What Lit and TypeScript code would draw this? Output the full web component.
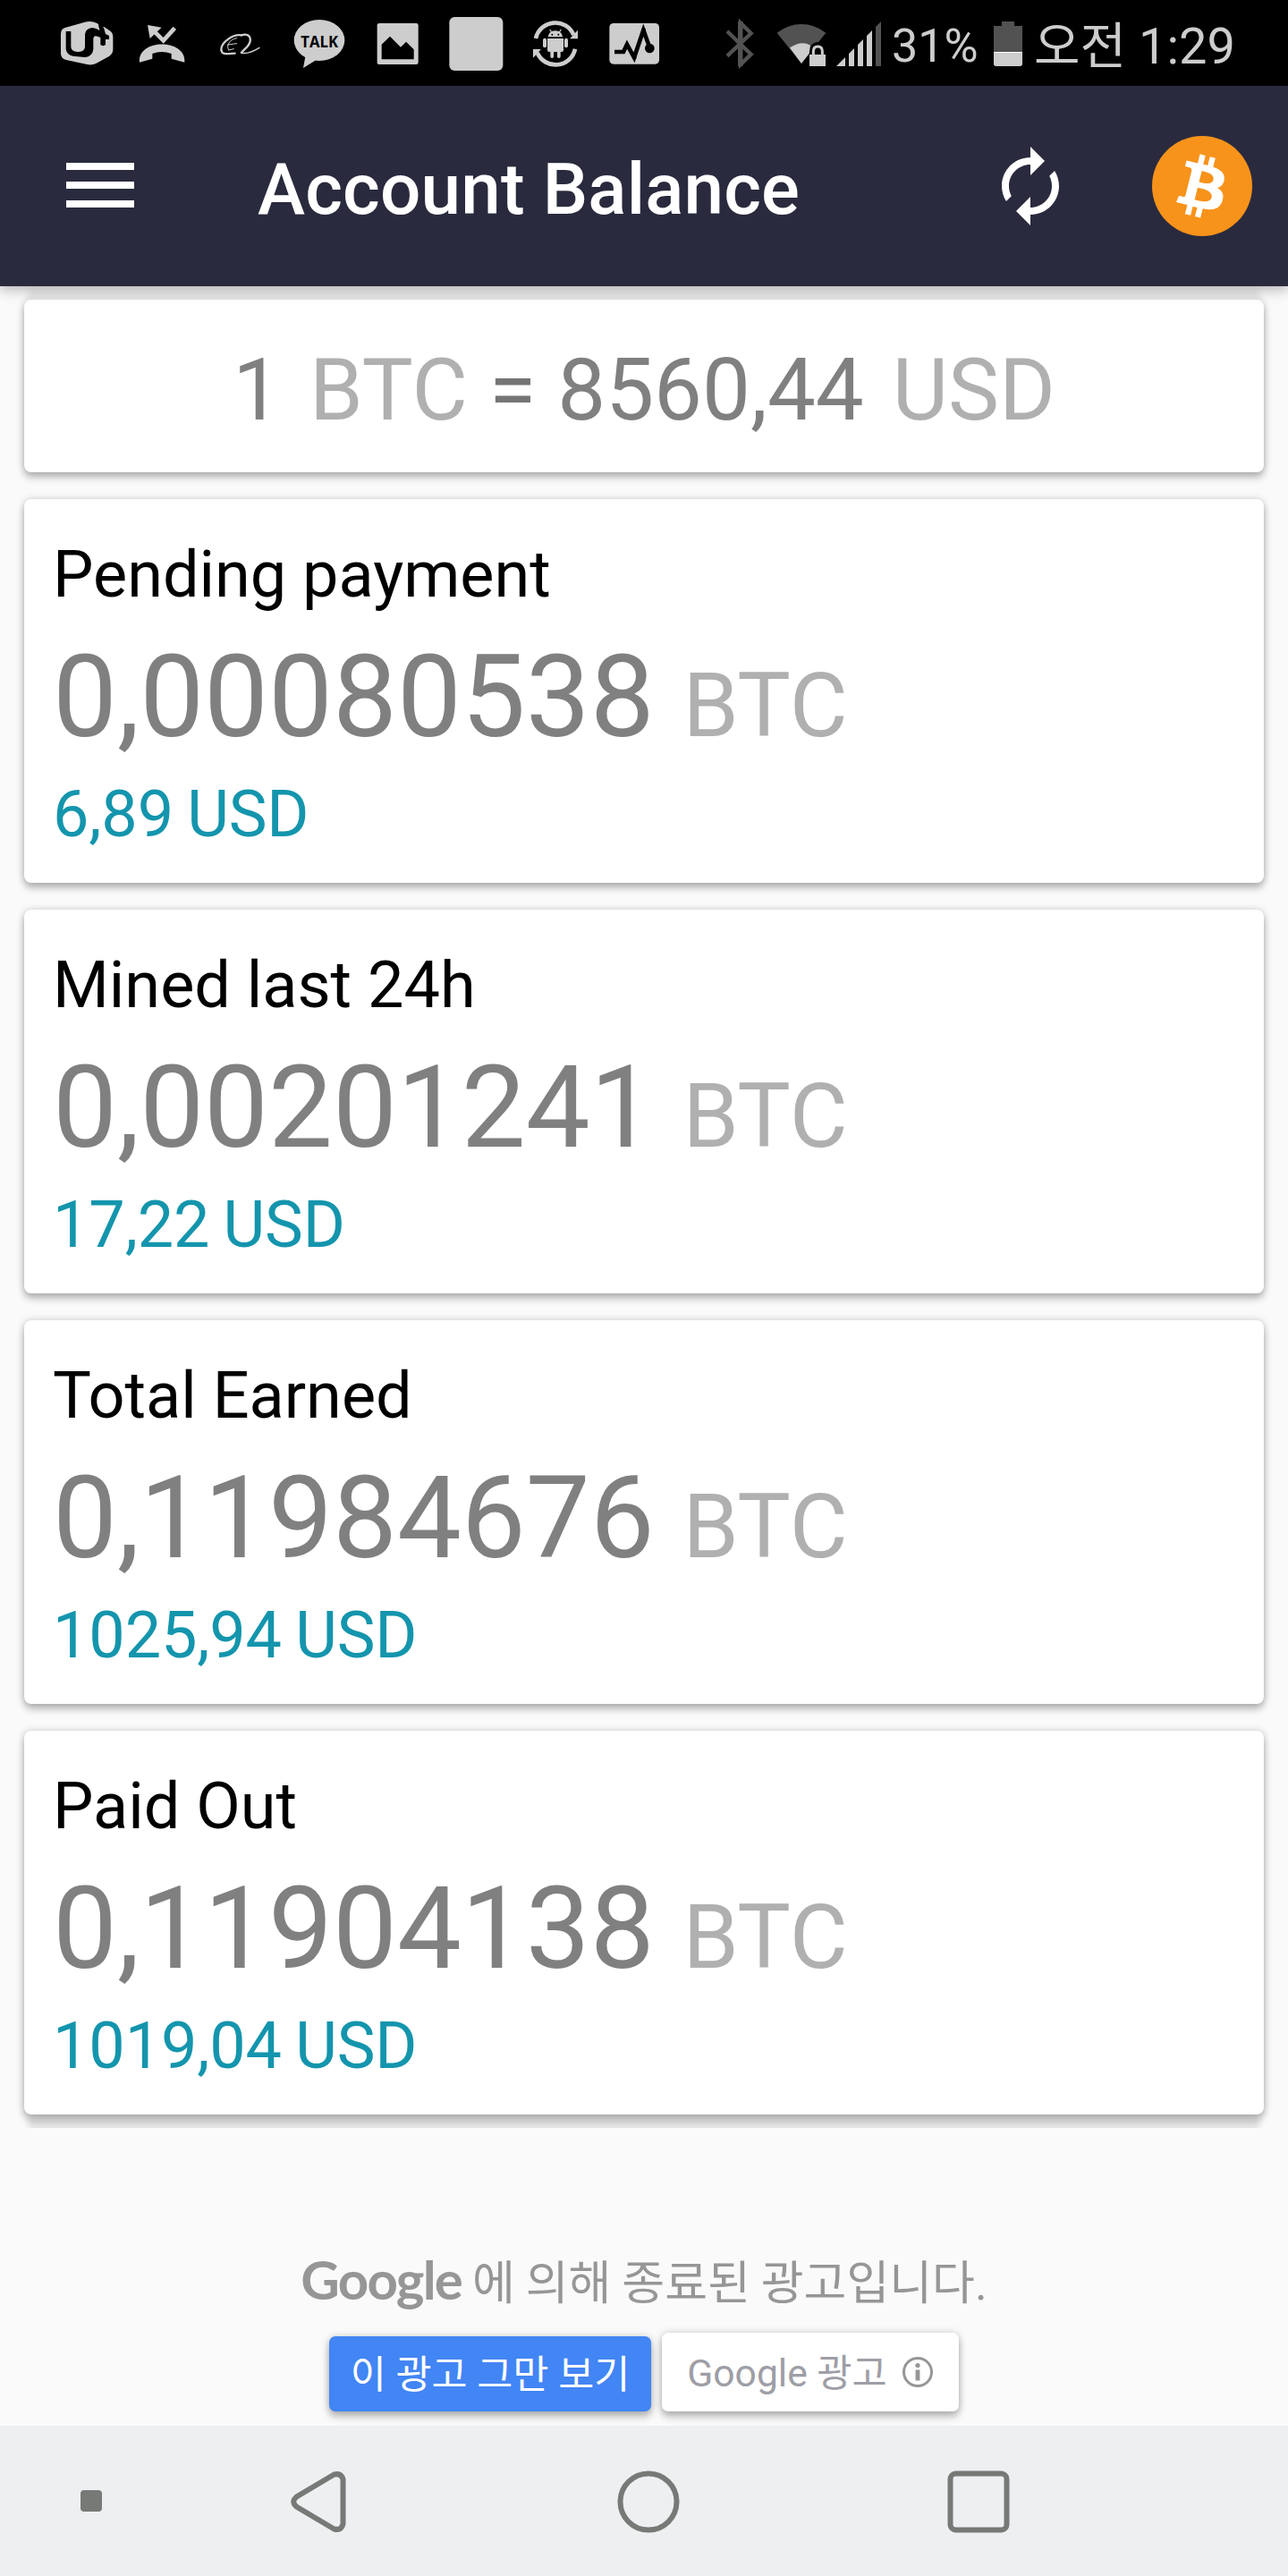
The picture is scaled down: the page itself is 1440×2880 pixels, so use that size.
import { LitElement, html, css, svg } from "lit";
import { customElement, property } from "lit/decorators.js";

const icon = (x: number, w: number, body: unknown) => html`<svg
  width=${w}
  height="96"
  viewBox="${x} 0 ${w * 3} 288"
  fill="#cdcdcd"
>
  ${body}
</svg>`;

@customElement("status-bar")
class StatusBar extends LitElement {
  static styles = css`
    :host {
      display: flex;
      height: 96px;
      background: #000;
      color: #cdcdcd;
      font-family: Roboto, "Noto Sans CJK KR", sans-serif;
      white-space: nowrap;
      padding-left: 66px;
    }
    svg {
      flex: none;
      display: block;
    }
    .notes {
      display: flex;
      gap: 20px;
      width: 744px;
      flex: none;
    }
    .system {
      display: flex;
      gap: 10px;
    }
    .percent {
      font-size: 52px;
      line-height: 103px;
      width: 104px;
      margin-left: 2px;
    }
    .clock {
      font-size: 56px;
      line-height: 104px;
      margin-left: 3px;
    }
    .talk {
      font: 700 54px "Open Sans", sans-serif;
      fill: #000;
    }
  `;

  render() {
    return html`
      <div class="notes">
        ${icon(78, 66, svg`
          <path d="M84 114Q84 98 98 93L165 74Q186 69 206 78Q213 82 212 92L229 90L250 104Q259 111 259 124V166Q259 180 247 188L202 213Q187 220 172 216L102 201Q84 196 84 180Z"/>
          <path d="M101 105H118V158Q120 172 140 174Q163 174 165 158V115Q167 95 190 93Q203 94 214 102L211 84L228 92L234 114L246 120V132H234V150Q225 157 217 150V126L207 122Q194 118 193 130V165Q190 190 165 192L125 188Q104 184 101 165Z" fill="#000"/>`)}
        ${icon(336, 68, svg`
          <path d="M348 209C340 128 506 128 499 209L455 197V180Q422 168 391 180V197Z"/>
          <path d="M375 84L422 92L383 129Z"/>
          <path d="M396 104L428 136L466 94" fill="none" stroke="#cdcdcd" stroke-width="14"/>`)}
        ${icon(600, 66, svg`
          <g fill="none" stroke="#cdcdcd" stroke-linecap="round">
            <path d="M690 118C660 114 622 142 622 166C622 186 645 180 668 179" stroke-width="7"/>
            <path d="M690 118C724 108 726 138 708 158L690 176" stroke-width="7"/>
            <path d="M688 177C706 182 724 176 750 160" stroke-width="4"/>
            <path d="M674 128C646 132 640 156 646 166M643 150L674 146M646 168L664 164" stroke-width="3"/>
          </g>`)}
        ${icon(858, 65, svg`
          <ellipse cx="951" cy="135" rx="85" ry="69"/>
          <path d="M906 180L897 228L942 200Z"/>
          <text class="talk" x="889" y="158" textLength="125" lengthAdjust="spacingAndGlyphs">TALK</text>`)}
        ${icon(34, 68, svg`
          <path d="M74 78H197Q204 78 204 85V209Q204 216 197 216H74Q66 216 66 209V85Q66 78 74 78Z"/>
          <path d="M81 149L109 122L145 158L163 140L189 166V199H81Z" fill="#000"/>`)}
        ${icon(299, 69, svg`<rect x="309" y="57" width="180" height="180" rx="18"/>`)}
        ${icon(564, 66, svg`
          <g fill="none" stroke="#cdcdcd" stroke-width="14">
            <path d="M597 129A67 67 0 0 1 724 117"/>
            <path d="M729 164A67 67 0 0 1 602 177"/>
          </g>
          <path d="M738 101V130H711Z"/>
          <path d="M588 194V165H615Z"/>
          <path d="M638 124Q640 104 662 103Q685 104 687 124Z"/>
          <path d="M644 99L650 108M682 99L676 108" stroke="#cdcdcd" stroke-width="4"/>
          <circle cx="652" cy="116" r="3" fill="#000"/><circle cx="673" cy="116" r="3" fill="#000"/>
          <path d="M636 129H690V168Q690 174 684 174H680V190Q680 195 674.500 195Q669 195 669 190V174H657V190Q657 195 651.500 195Q646 195 646 190V174H642Q636 174 636 168Z"/>
          <rect x="621" y="128" width="12" height="32" rx="6"/><rect x="693" y="128" width="12" height="32" rx="6"/>`)}
        ${icon(822, 66, svg`
          <rect x="844" y="78" width="167" height="137" rx="14"/>
          <path d="M861 174H891L903 149L927 193L958 101L980 162" fill="none" stroke="#000" stroke-width="14"/>
          <path d="M897 144H909V156H897ZM921 184H934V198H921ZM951 96H966V112H951Z" fill="#000"/>
          <circle cx="979" cy="162" r="16" fill="#000"/>`)}
      </div>
      <div class="system">
        ${icon(30, 36, svg`
          <path d="M39 105L119 182L84 216V77L119 112L39 188" fill="none" stroke="#525252" stroke-width="13"/>
          <path d="M75 72H91V222H75Z" fill="#525252"/>`)}
        ${icon(168, 69, svg`
          <path d="M206 110Q244 81 288 81Q332 81 370 110L346 140Q322 142 314 164L288 213Z" fill="#525252"/>
          <path d="M249 160Q288 134 318 152L314 180L288 213Z"/>
          <path d="M328 186V172Q328 156 343 156Q358 156 358 172V186" fill="none" stroke="#000" stroke-width="20"/>
          <path d="M328 186V172Q328 156 343 156Q358 156 358 172V186" fill="none" stroke="#cdcdcd" stroke-width="9"/>
          <path d="M315 183H369V222H315Z"/>`)}
        ${icon(405, 50, svg`
          <path d="M405 222L435 192V222ZM447 222V180L465 162V222ZM477 222V150L495 132V222ZM507 222V120L525 102V222Z"/>
          <path d="M537 222V90L555 72V222Z" fill="#525252"/>`)}
        <span class="percent">31%</span>
        ${icon(933, 32, svg`
          <path d="M960 72H1002V87H1029V174H933V87H960Z" fill="#525252"/>
          <path d="M933 174H1029V214Q1029 222 1021 222H941Q933 222 933 214Z"/>
          <path d="M933 174H1029V177H933Z" fill="#fff"/>`)}
        <span class="clock">오전 1:29</span>
      </div>
    `;
  }
}

@customElement("app-header")
class AppHeader extends LitElement {
  static styles = css`
    :host {
      display: flex;
      align-items: center;
      box-sizing: border-box;
      height: 224px;
      padding: 0 40px 0 74px;
      background: #2a2a3e;
      color: #fff;
      box-shadow: 0 4px 14px rgba(0, 0, 0, 0.28);
      position: relative;
      z-index: 1;
    }
    .menu {
      display: grid;
      gap: 13px;
      width: 76px;
      margin: -2px 138px 0 0;
    }
    .menu i {
      height: 8px;
      background: #fff;
    }
    h1 {
      flex: 1;
      margin: 0;
      padding-top: 8px;
      font: 500 80px/96px Roboto, sans-serif;
      letter-spacing: 0.15px;
    }
    svg {
      display: block;
    }
    .refresh {
      margin-right: 88px;
    }
  `;

  render() {
    return html`
      <div class="menu"><i></i><i></i><i></i></div>
      <h1>Account Balance</h1>
      <svg class="refresh" width="96" height="96" viewBox="0 0 24 24" fill="#fff">
        <path
          d="M12 6v3l4-4-4-4v3c-4.42 0-8 3.58-8 8 0 1.57.46 3.03 1.24 4.26L6.7 14.8c-.45-.83-.7-1.79-.7-2.8 0-3.31 2.69-6 6-6zm6.76 1.74L17.3 9.2c.44.84.7 1.79.7 2.8 0 3.31-2.69 6-6 6v-3l-4 4 4 4v-3c4.42 0 8-3.58 8-8 0-1.57-.46-3.03-1.24-4.26z"
        />
      </svg>
      <svg width="112" height="112" viewBox="0 0 32 32">
        <circle cx="16" cy="16" r="16" fill="#f7931a" />
        <path
          fill="#fff"
          transform="translate(-0.6 -0.3) scale(1.02)"
          d="M23.189 14.02c.314-2.096-1.283-3.223-3.465-3.975l.708-2.84-1.728-.43-.69 2.765c-.454-.114-.92-.22-1.385-.326l.695-2.783L15.596 6l-.708 2.839c-.376-.086-.746-.17-1.104-.26l.002-.009-2.384-.595-.46 1.846s1.283.294 1.256.312c.7.175.826.638.805 1.006l-.806 3.235c.048.012.11.03.18.057l-.183-.045-1.13 4.532c-.086.212-.303.531-.793.41.018.025-1.256-.313-1.256-.313l-.858 1.978 2.25.561c.418.105.828.215 1.231.318l-.715 2.872 1.727.43.708-2.84c.472.127.93.245 1.378.357l-.706 2.828 1.728.43.715-2.866c2.948.558 5.164.333 6.097-2.333.752-2.146-.037-3.385-1.588-4.192 1.13-.26 1.98-1.003 2.207-2.538zm-3.95 5.538c-.533 2.147-4.148.986-5.32.695l.95-3.805c1.172.293 4.929.872 4.37 3.11zm.535-5.569c-.487 1.953-3.495.96-4.47.717l.86-3.45c.975.243 4.118.696 3.61 2.733z"
        />
      </svg>
    `;
  }
}

@customElement("balance-card")
class BalanceCard extends LitElement {
  @property() label = "";
  @property() amount = "";
  @property() fiat = "";

  static styles = css`
    :host {
      display: block;
      box-sizing: border-box;
      height: 429px;
      padding: 37px 32px 0;
      background: #fff;
      border-radius: 8px;
      box-shadow: 0 6px 9px rgba(0, 0, 0, 0.24), 0 0 8px rgba(0, 0, 0, 0.18);
      white-space: nowrap;
    }
    h2,
    p {
      margin: 0;
      font-weight: 400;
    }
    h2 {
      font-size: 72px;
      line-height: 96px;
      color: #000;
    }
    .amount {
      margin-top: 13px;
      font-size: 128px;
      line-height: 150px;
      color: #808080;
    }
    .unit {
      font-size: 100px;
      line-height: 1;
      color: #b0b0b0;
    }
    .fiat {
      margin-top: 9px;
      font-size: 72px;
      line-height: 96px;
      letter-spacing: -0.15px;
      word-spacing: -2.5px;
      color: #1495ad;
    }
  `;

  render() {
    return html`
      <h2>${this.label}</h2>
      <p class="amount">${this.amount} <span class="unit">BTC</span></p>
      <p class="fiat">${this.fiat} USD</p>
    `;
  }
}

const balances = [
  { label: "Pending payment", amount: "0,00080538", fiat: "6,89" },
  { label: "Mined last 24h", amount: "0,00201241", fiat: "17,22" },
  { label: "Total Earned", amount: "0,11984676", fiat: "1025,94" },
  { label: "Paid Out", amount: "0,11904138", fiat: "1019,04" },
];

@customElement("app-root")
class AppRoot extends LitElement {
  static styles = css`
    :host {
      display: flex;
      flex-direction: column;
      width: 1440px;
      height: 2880px;
      overflow: hidden;
      background: #fafafa;
      font-family: Roboto, "Noto Sans CJK KR", sans-serif;
    }
    main {
      display: flex;
      flex-direction: column;
      gap: 30px;
      box-sizing: border-box;
      height: 2059px;
      flex: none;
      padding: 0 27px;
      overflow: hidden;
    }
    .edge {
      height: 15px;
      flex: none;
      mask-image: linear-gradient(90deg, transparent, #000 10px, #000 calc(100% - 10px), transparent);
    }
    .edge.top {
      margin-bottom: -30px;
      background: linear-gradient(#f6f6f6, #ebebeb 50%, #e0e0e0);
    }
    .edge.bottom {
      margin-top: -30px;
      background: linear-gradient(rgba(0, 0, 0, 0), rgba(0, 0, 0, 0.1) 55%, rgba(0, 0, 0, 0.08));
    }
    .rate {
      flex: none;
      box-sizing: border-box;
      height: 193px;
      padding-top: 9px;
      background: #fff;
      border-radius: 8px;
      box-shadow: 0 6px 9px rgba(0, 0, 0, 0.24), 0 0 8px rgba(0, 0, 0, 0.18);
      font-size: 96px;
      line-height: 184px;
      text-align: center;
      color: #808080;
      white-space: nowrap;
    }
    .rate span {
      margin-left: 8px;
      color: #b0b0b0;
    }
    .rate b {
      font-weight: 400;
      color: #757575;
    }
    .ad {
      flex: 1;
      display: flex;
      flex-direction: column;
      align-items: center;
      padding-top: 139px;
    }
    .ad p {
      margin: 0;
      height: 72px;
      font-size: 52px;
      line-height: 72px;
      word-spacing: -1px;
      color: #969696;
      white-space: nowrap;
    }
    .brand {
      font-family: Lato, sans-serif;
      font-weight: 700;
      font-size: 60px;
      letter-spacing: -1.8px;
      line-height: 1;
    }
    .actions {
      display: flex;
      align-items: flex-end;
      gap: 12px;
      margin-top: 18px;
    }
    .button {
      display: flex;
      align-items: center;
      justify-content: center;
      box-sizing: border-box;
      border-radius: 7px;
      box-shadow: 0 6px 9px rgba(0, 0, 0, 0.24), 0 0 8px rgba(0, 0, 0, 0.18);
      white-space: nowrap;
    }
    .stop {
      width: 360px;
      height: 84px;
      padding-bottom: 6px;
      background: #4285f4;
      color: #fff;
      font-size: 43.5px;
    }
    .about {
      width: 332px;
      height: 88px;
      gap: 16px;
      background: #fff;
      color: #9e9ea6;
      font-size: 42.6px;
    }
    .about span {
      padding-bottom: 5px;
    }
    nav {
      display: flex;
      align-items: center;
      height: 168px;
      padding-left: 90px;
      background: #eeeff1;
    }
    .dot {
      width: 24px;
      height: 24px;
      border-radius: 4px;
      background: #777977;
      margin-right: 208px;
    }
    nav svg {
      display: block;
      margin-top: 2px;
    }
    .back {
      margin-right: 298px;
    }
    .home {
      margin-right: 299px;
    }
  `;

  render() {
    return html`
      <status-bar></status-bar>
      <app-header></app-header>
      <main>
        <div class="edge top"></div>
        <div class="rate">1 <span>BTC</span> <b>=</b> 8560,44 <span>USD</span></div>
        ${balances.map(
          (b) => html`<balance-card
            .label=${b.label}
            .amount=${b.amount}
            .fiat=${b.fiat}
          ></balance-card>`
        )}
        <div class="edge bottom"></div>
      </main>
      <section class="ad">
        <p><span class="brand">Google</span> 에 의해 종료된 광고입니다.</p>
        <div class="actions">
          <div class="button stop">이 광고 그만 보기</div>
          <div class="button about">
            <span>Google 광고</span>
            <svg width="36" height="36" viewBox="0 0 36 36">
              <circle cx="18" cy="18" r="15.500" fill="none" stroke="#969696" stroke-width="3" />
              <circle cx="18" cy="10.500" r="2.600" fill="#969696" />
              <path d="M15.600 15.500h4.800v12h-4.800z" fill="#969696" />
            </svg>
          </div>
        </div>
      </section>
      <nav>
        <div class="dot"></div>
        <svg class="back" width="70" height="70" viewBox="0 0 70 70" fill="none" stroke="#777977" stroke-width="6">
          <path d="M51.500 4.500L9.500 29.500Q3 35 9.500 40.500L51.500 65.500Q59.500 67.500 61.500 60V10Q59.500 2.500 51.500 4.500Z" />
        </svg>
        <svg class="home" width="70" height="70" viewBox="0 0 70 70" fill="none" stroke="#777977" stroke-width="6">
          <circle cx="35" cy="35" r="31.500" />
        </svg>
        <svg width="70" height="70" viewBox="0 0 70 70" fill="none" stroke="#777977" stroke-width="6">
          <rect x="3.500" y="3.500" width="63" height="63" rx="6" />
        </svg>
      </nav>
    `;
  }
}
